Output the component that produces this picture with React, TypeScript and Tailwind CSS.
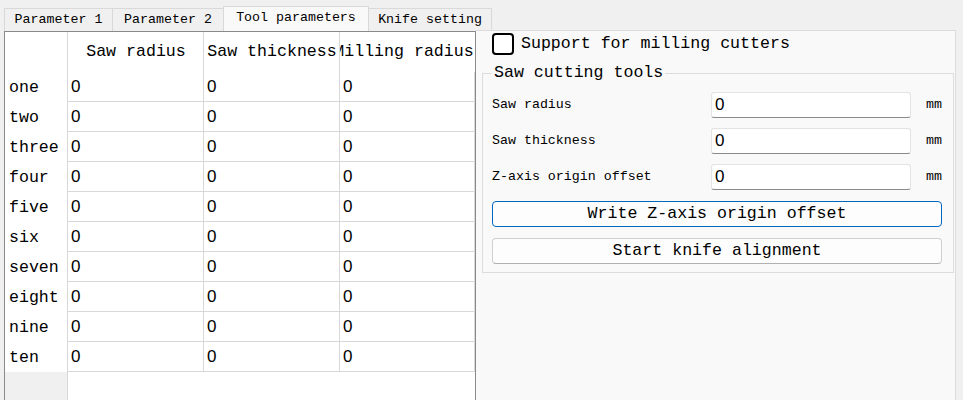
import React from "react";

const rows = ["one", "two", "three", "four", "five", "six", "seven", "eight", "nine", "ten"];
const cols = ["Saw radius", "Saw thickness", "Milling radius"];
const colW = ["w-[136px]", "w-[136px]", "w-[135px]"];

const fields = ["Saw radius", "Saw thickness", "Z-axis origin offset"];

const App: React.FC = () => {
  const tabs = [
    { label: "Parameter 1", w: "w-[109px]" },
    { label: "Parameter 2", w: "w-[112px]" },
    { label: "Tool parameters", w: "w-[146px]", active: true },
    { label: "Knife setting", w: "w-[124px]" },
  ];

  return (
    <div className="w-[963px] h-[400px] overflow-hidden bg-[#f0f0f0] text-black font-['Liberation_Mono',monospace]">
      {/* Tabs */}
      <div className="flex items-end h-[31px] pl-[4px]">
        {tabs.map((t) => (
          <div
            key={t.label}
            className={`${t.w} flex items-center justify-center text-[13.3px] border border-b-0 border-[#d9d9d9] -ml-px first:ml-0 ${
              t.active ? "h-[25px] bg-[#f9f9f9] pb-[2px] relative z-10" : "h-[23px] bg-[#f0f0f0]"
            }`}
          >
            {t.label}
          </div>
        ))}
      </div>

      <div className="flex h-[369px] pl-[4px]">
        {/* Table */}
        <div className="w-[472px] h-full border border-b-0 border-[#8a8a8a] bg-white flex flex-col">
          {/* header row */}
          <div className="flex h-[40px] shrink-0">
            <div className="w-[63px] border-r border-[#d8d8d8]" />
            {cols.map((c, i) => (
              <div
                key={c}
                className={`${colW[i]} border-r border-[#d8d8d8] last:border-r-0 flex items-center overflow-hidden whitespace-nowrap text-[16.6px]`}
              >
                <div className={`w-[150px] shrink-0 text-center ${i === 2 ? "-ml-[11px]" : "-ml-[7px]"}`}>{c}</div>
              </div>
            ))}
          </div>
          {rows.map((r) => (
            <div key={r} className="flex h-[30px] shrink-0 text-[16.6px]">
              <div className="w-[63px] border-r border-[#d8d8d8] flex items-center pl-[4px] pt-[2px]">{r}</div>
              {cols.map((c, i) => (
                <div
                  key={c}
                  className={`${colW[i]} border-r border-b border-[#d8d8d8] flex items-center pl-[3px] font-['Liberation_Sans',sans-serif] text-[17px]`}
                >
                  0
                </div>
              ))}
            </div>
          ))}
          <div className="flex flex-1">
            <div className="w-[63px] bg-[#f0f0f0] border-r border-[#d8d8d8]" />
            <div className="flex-1" />
          </div>
        </div>

        {/* Right panel */}
        <div className="w-[480px] -mt-px h-[370px] bg-[#f9f9f9] border-t border-r border-[#dcdcdc]">
          <div className="flex items-center gap-[7px] pl-[16px] pt-[1px] h-[25px]">
            <div className="w-[22px] h-[22px] rounded-[4px] border-2 border-black bg-white" />
            <span className="text-[16.6px]">Support for milling cutters</span>
          </div>

          <fieldset className="ml-[6px] mr-px mt-[7px] border border-[#dcdcdc] pl-[9px] pr-[9px] pb-[8px]">
            <legend className="px-[2px] text-[16.6px] leading-[20px]">Saw cutting tools</legend>
            <div className="flex flex-col gap-[10px] mt-[9px]">
              {fields.map((f) => (
                <div key={f} className="flex items-center h-[26px]">
                  <span className="w-[219px] text-[13.3px]">{f}</span>
                  <div className="w-[200px] h-[26px] bg-white border border-[#e3e3e3] border-b-[#8a8a8a] rounded-[3px] flex items-center pl-[3px] font-['Liberation_Sans',sans-serif] text-[17px]">
                    0
                  </div>
                  <span className="ml-[15px] text-[13.3px]">mm</span>
                </div>
              ))}
            </div>
            <button className="mt-[11px] w-[450px] h-[26px] rounded-[4px] border border-[#0067c0] bg-[#fdfdfd] text-[16.6px] flex items-center justify-center">
              Write Z-axis origin offset
            </button>
            <button className="mt-[11px] w-[450px] h-[26px] rounded-[4px] border border-[#d0d0d0] border-b-[#b0b0b0] bg-[#fdfdfd] text-[16.6px] flex items-center justify-center">
              Start knife alignment
            </button>
          </fieldset>
        </div>
      </div>
    </div>
  );
};

export default App;
